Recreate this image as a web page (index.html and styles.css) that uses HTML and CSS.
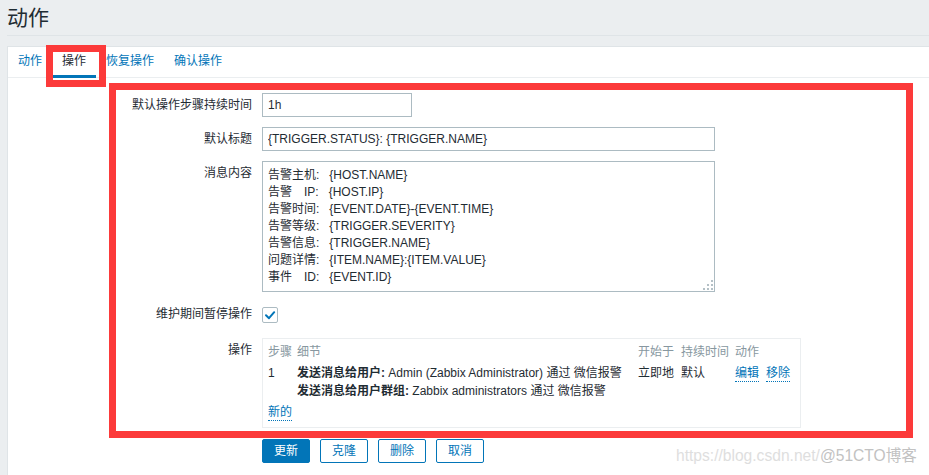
FILE: index.html
```html
<!DOCTYPE html>
<html lang="zh-CN">
<head>
<meta charset="utf-8">
<title>动作</title>
<link rel="stylesheet" href="styles.css">
</head>
<body>
<div class="page">
  <header class="page-header">
    <h1 class="page-title">动作</h1>
  </header>
  <main class="panel">
    <ul class="tabs">
      <li class="tab">动作</li>
      <li class="tab tab-active">操作</li>
      <li class="tab">恢复操作</li>
      <li class="tab">确认操作</li>
    </ul>
    <form class="form">
      <label class="form-label">默认操作步骤持续时间</label>
      <div class="form-field"><input class="input input-short" type="text" value="1h"></div>

      <label class="form-label">默认标题</label>
      <div class="form-field"><input class="input input-wide" type="text" value="{TRIGGER.STATUS}: {TRIGGER.NAME}"></div>

      <label class="form-label">消息内容</label>
      <div class="form-field textarea-wrap"><textarea class="textarea">告警主机:   {HOST.NAME}
告警　IP:   {HOST.IP}
告警时间:   {EVENT.DATE}-{EVENT.TIME}
告警等级:   {TRIGGER.SEVERITY}
告警信息:   {TRIGGER.NAME}
问题详情:   {ITEM.NAME}:{ITEM.VALUE}
事件　ID:   {EVENT.ID}</textarea><span class="grip"></span></div>

      <label class="form-label">维护期间暂停操作</label>
      <div class="form-field form-field-check">
        <span class="checkbox"><svg width="14" height="14" viewBox="0 0 14 14"><polyline points="3,7.3 6,10.2 11.2,4.2" fill="none" stroke="#0275b8" stroke-width="2" stroke-linecap="round" stroke-linejoin="round"/></svg></span>
      </div>

      <label class="form-label">操作</label>
      <div class="form-field">
        <div class="ops">
          <table class="ops-table">
            <colgroup>
              <col class="c-step"><col class="c-detail"><col class="c-start"><col class="c-dur"><col class="c-act">
            </colgroup>
            <thead>
              <tr><th>步骤</th><th>细节</th><th>开始于</th><th>持续时间</th><th>动作</th></tr>
            </thead>
            <tbody>
              <tr>
                <td>1</td>
                <td><b>发送消息给用户:</b> Admin (Zabbix Administrator) 通过 微信报警<br><b>发送消息给用户群组:</b> Zabbix administrators 通过 微信报警</td>
                <td>立即地</td>
                <td>默认</td>
                <td><span class="row-links"><a class="link">编辑</a><a class="link">移除</a></span></td>
              </tr>
            </tbody>
          </table>
          <a class="link link-new">新的</a>
        </div>
      </div>

      <div class="form-label"></div>
      <div class="form-actions">
        <button type="button" class="btn btn-primary">更新</button>
        <button type="button" class="btn">克隆</button>
        <button type="button" class="btn">删除</button>
        <button type="button" class="btn">取消</button>
      </div>
    </form>
  </main>
  <div class="mark mark-tab"></div>
  <div class="mark mark-form"></div>
  <div class="watermark"><span class="wm-light">https://blog.csdn.net/</span><span class="wm-dark">@51CTO博客</span></div>
</div>
</body>
</html>
```

FILE: styles.css
```css
html, body {
  margin: 0;
  height: 100%;
}

body {
  background: #ebeef0;
  font-family: "Liberation Sans", "Noto Sans CJK SC", sans-serif;
  font-size: 12px;
  color: #1f2c33;
}

.page {
  position: relative;
  height: 100%;
  box-sizing: border-box;
  padding-left: 7px;
  display: flex;
  flex-direction: column;
  overflow: hidden;
}

.page-header {
  height: 35px;
  border-bottom: 1px solid #dfe4e7;
  margin-bottom: 10px;
}

.page-title {
  margin: 0;
  padding-top: 6px;
  font-size: 21px;
  line-height: 24px;
  font-weight: normal;
  color: #1f2c33;
}

.panel {
  flex: 1;
  background: #ffffff;
  border-left: 1px solid #dfe4e7;
  border-top: 1px solid #dfe4e7;
}

.tabs {
  list-style: none;
  margin: 0;
  padding: 0;
  display: flex;
  height: 30px;
  border-bottom: 1px solid #ebeef0;
}

.tab {
  padding: 0 10px;
  height: 31px;
  box-sizing: border-box;
  line-height: 28px;
  border-bottom: 3px solid transparent;
  color: #0275b8;
  margin-bottom: -1px;
}

.tab-active {
  color: #1f2c33;
  border-bottom-color: #0275b8;
}

.form {
  padding-top: 15px;
  display: grid;
  grid-template-columns: 244px 1fr;
  column-gap: 10px;
  row-gap: 10px;
  align-items: start;
}

.form-label {
  text-align: right;
  padding-top: 5px;
  line-height: 14px;
}

.form-field-check {
  height: 26px;
}

.input {
  height: 24px;
  box-sizing: border-box;
  border: 1px solid #acbbc2;
  padding: 0 5px;
  font: inherit;
  color: #1f2c33;
  background: #fff;
  outline: none;
  display: block;
}

.input-short { width: 150px; }
.input-wide { width: 453px; }

.textarea-wrap {
  position: relative;
  width: 453px;
}

.textarea {
  display: block;
  width: 453px;
  height: 131px;
  box-sizing: border-box;
  border: 1px solid #acbbc2;
  padding: 5px 5px;
  font: inherit;
  line-height: 17px;
  color: #1f2c33;
  overflow: hidden;
  resize: none;
  outline: none;
}

.grip {
  position: absolute;
  right: 1px;
  bottom: 1px;
  width: 12px;
  height: 12px;
  background:
    radial-gradient(circle, #b4c0c6 0.9px, transparent 1.2px) 8px 0 / 4px 4px no-repeat,
    radial-gradient(circle, #b4c0c6 0.9px, transparent 1.2px) 4px 4px / 4px 4px no-repeat,
    radial-gradient(circle, #b4c0c6 0.9px, transparent 1.2px) 8px 4px / 4px 4px no-repeat,
    radial-gradient(circle, #b4c0c6 0.9px, transparent 1.2px) 0 8px / 4px 4px no-repeat,
    radial-gradient(circle, #b4c0c6 0.9px, transparent 1.2px) 4px 8px / 4px 4px no-repeat,
    radial-gradient(circle, #b4c0c6 0.9px, transparent 1.2px) 8px 8px / 4px 4px no-repeat;
}

.checkbox {
  display: flex;
  align-items: center;
  justify-content: center;
  width: 16px;
  height: 16px;
  box-sizing: border-box;
  border: 1px solid #acbbc2;
  border-radius: 2px;
  margin-top: 5px;
}

.ops {
  width: 539px;
  height: 90px;
  box-sizing: border-box;
  border: 1px solid #ebeef0;
  padding: 4px 5px 5px;
}

.ops-table {
  border-collapse: collapse;
  border-spacing: 0;
  table-layout: fixed;
  width: 527px;
}

.c-step { width: 29px; }
.c-detail { width: 341px; }
.c-start { width: 43px; }
.c-dur { width: 54px; }

.ops-table th,
.ops-table td {
  padding: 0;
  text-align: left;
  vertical-align: top;
  line-height: 18px;
  white-space: nowrap;
}

.ops-table th {
  font-weight: normal;
  color: #8797a0;
}

.ops-table td {
  padding-top: 3px;
}

.ops-table b {
  font-weight: bold;
}

.row-links {
  display: flex;
  gap: 7px;
}

.link {
  color: #0275b8;
  display: inline-block;
  line-height: 14px;
  padding-bottom: 1px;
  border-bottom: 1px dotted #0275b8;
  cursor: pointer;
}

.row-links .link {
  margin-top: 2px;
}

.link-new {
  margin-top: 5px;
}

.form-actions {
  display: flex;
  gap: 10px;
  padding-top: 1px;
}

.btn {
  height: 24px;
  box-sizing: border-box;
  padding: 0 11px;
  border: 1px solid #0275b8;
  border-radius: 2px;
  background: #ffffff;
  color: #0275b8;
  font: inherit;
  line-height: 22px;
}

.btn-primary {
  background: #0275b8;
  color: #ffffff;
}

.mark {
  position: absolute;
  box-sizing: border-box;
  border: 7px solid #fc3a3a;
  pointer-events: none;
}

.mark-tab {
  left: 46px;
  top: 45px;
  width: 60px;
  height: 42px;
}

.mark-form {
  left: 109px;
  top: 83px;
  width: 804px;
  height: 355px;
}

.watermark {
  position: absolute;
  left: 676px;
  top: 446px;
  font-family: "Liberation Sans", "Noto Sans CJK SC", sans-serif;
  font-size: 15.6px;
  line-height: 20px;
  white-space: nowrap;
}

.wm-light {
  color: #dedede;
}

.wm-dark {
  color: #c2c2c2;
}
```
